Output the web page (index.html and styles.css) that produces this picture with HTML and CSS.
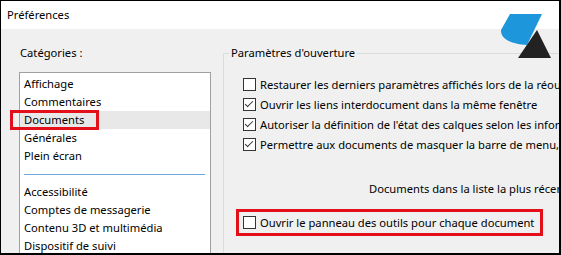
FILE: index.html
```html
<!DOCTYPE html>
<html lang="fr">
<head>
    <meta charset="UTF-8">
    <meta name="viewport" content="width=device-width, initial-scale=1.0">
    <title>Préférences</title>
    <link rel="stylesheet" href="styles.css">
</head>
<body>

    <div class="window">

        <!-- Title bar -->
        <div class="titlebar">Préférences</div>

        <!-- Logo watermark -->
        <svg class="logo" width="60" height="52" viewBox="0 0 60 52">
            <path d="M14 4 H46 L31 35 C24 35 4 32 5 20 Z" fill="#1e96dc"/>
            <path d="M41 20 L55 48 L22 48 Z" fill="#222"/>
        </svg>

        <div class="content">

            <!-- Categories -->
            <div class="categories">
                <div class="label">Catégories :</div>
                <ul class="cat-list">
                    <li>Affichage</li>
                    <li>Commentaires</li>
                    <li class="selected marked">Documents</li>
                    <li>Générales</li>
                    <li>Plein écran</li>
                    <li class="sep"></li>
                    <li>Accessibilité</li>
                    <li>Comptes de messagerie</li>
                    <li>Contenu 3D et multimédia</li>
                    <li>Dispositif de suivi</li>
                </ul>
            </div>

            <!-- Opening settings -->
            <fieldset class="group">
                <legend>Paramètres d'ouverture</legend>

                <div class="options">
                    <div class="option"><span class="box"></span>Restaurer les derniers paramètres affichés lors de la réouverture des documents</div>
                    <div class="option"><span class="box checked"></span>Ouvrir les liens interdocument dans la même fenêtre</div>
                    <div class="option"><span class="box checked"></span>Autoriser la définition de l'état des calques selon les informations utilisateur</div>
                    <div class="option"><span class="box checked"></span>Permettre aux documents de masquer la barre de menu, les barres d'outils</div>
                </div>

                <div class="recent">Documents dans la liste la plus récente :</div>

                <div class="option marked-row"><span class="box"></span>Ouvrir le panneau des outils pour chaque document</div>
            </fieldset>

        </div>
    </div>

</body>
</html>
```

FILE: styles.css
```css
body {
    margin: 0;
    font-family: "Noto Sans", "Open Sans", sans-serif;
    font-size: 11.2px;
    color: #000;
}

.window {
    position: relative;
    width: 561px;
    height: 255px;
    box-sizing: border-box;
    border: 1px solid #000;
    border-right-width: 2px;
    border-bottom-width: 2px;
    background-color: #f0f0f0;
    overflow: hidden;
    white-space: nowrap;
}

.titlebar {
    height: 28px;
    line-height: 28px;
    padding-left: 6px;
    background-color: #fff;
}

.logo {
    position: absolute;
    left: 495px;
    top: 9px;
}

.content {
    display: flex;
    align-items: flex-start;
    padding: 16px 0 0 18px;
}

/* Categories list */
.categories {
    width: 192px;
    flex-shrink: 0;
}

.label {
    line-height: 16px;
    padding-left: 1px;
    margin-bottom: 11px;
}

.cat-list {
    list-style: none;
    margin: 0;
    padding: 2px 0 10px 0;
    background-color: #fff;
    border: 1px solid #a0a0a0;
}

.cat-list li {
    position: relative;
    height: 18px;
    line-height: 18px;
    padding-left: 4px;
}

.cat-list li.selected {
    background-color: #e8e8e8;
}

.cat-list li.marked::after {
    content: "";
    position: absolute;
    left: -10px;
    top: -1px;
    width: 83px;
    height: 14px;
    border: 3px solid #e3101a;
}

.cat-list li.sep {
    height: 1px;
    margin: 9px 5px 8px 4px;
    padding: 0;
    background-color: #6fa6dc;
}

/* Group box */
.group {
    margin: 0 0 0 12px;
    padding: 0 0 0 5px;
    width: 420px;
    height: 260px;
    border: 1px solid #dcdcdc;
    flex-shrink: 0;
}

.group legend {
    padding: 0 2px;
    line-height: 16px;
}

.options {
    margin-top: 13px;
}

.option {
    position: relative;
    display: flex;
    align-items: center;
    gap: 4px;
    height: 20px;
    padding-left: 14px;
}

.box {
    width: 11px;
    height: 11px;
    flex-shrink: 0;
    border: 1px solid #333;
    background-color: #fff;
    position: relative;
}

.box.checked::after {
    content: "";
    position: absolute;
    left: 3px;
    top: 0px;
    width: 3px;
    height: 7px;
    border-right: 1px solid #333;
    border-bottom: 1px solid #333;
    transform: rotate(45deg);
}

.recent {
    margin-top: 25px;
    height: 20px;
    line-height: 20px;
    padding-left: 140px;
}

.marked-row {
    display: inline-flex;
    margin-top: 13px;
}

.marked-row::after {
    content: "";
    position: absolute;
    left: 7px;
    right: -9px;
    top: -3px;
    bottom: -4px;
    border: 3px solid #e3101a;
}
```
